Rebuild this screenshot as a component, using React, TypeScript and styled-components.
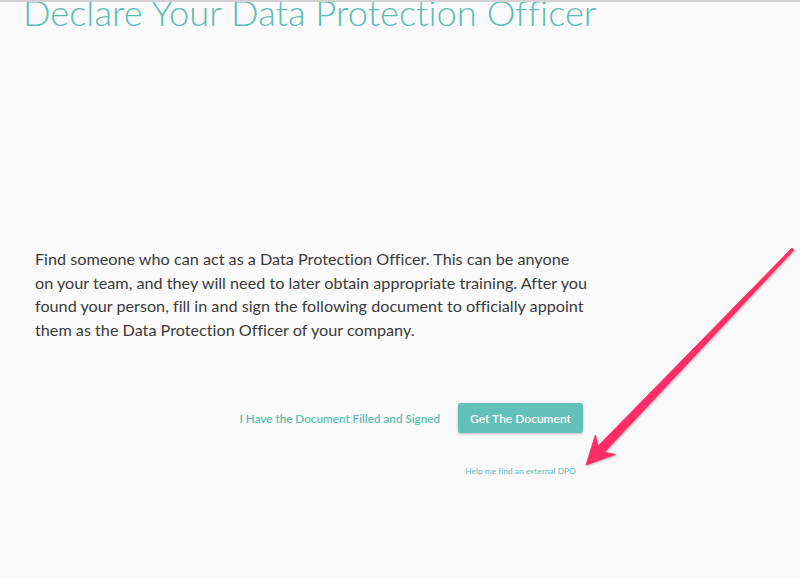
import React from "react";
import styled, { createGlobalStyle } from "styled-components";

const COLORS = {
  background: "#fafafa",
  teal: "#5bbdb5",
  button: "#62c0b8",
  text: "#3a3a3a",
  line: "#d2d2d2",
  arrow: "#fd2d68",
};

const GlobalStyle = createGlobalStyle`
  html, body {
    margin: 0;
    padding: 0;
    background: ${COLORS.background};
  }
  body {
    font-family: Lato, "Open Sans", "Liberation Sans", sans-serif;
    font-variant-ligatures: no-common-ligatures;
  }
`;

const Page = styled.div`
  position: relative;
  min-height: 578px;
  box-sizing: border-box;
  border-top: 2px solid ${COLORS.line};
  background: ${COLORS.background};
  overflow: hidden;
`;

const Content = styled.div`
  width: 580px;
  margin-left: 23px;
  overflow: hidden;
`;

const Title = styled.h1`
  margin: -10px 0 0;
  font-size: 36.3px;
  line-height: 40px;
  font-weight: 300;
  color: ${COLORS.teal};
  white-space: nowrap;
`;

const Description = styled.p`
  margin: 215px 0 0 12px;
  width: 566px;
  font-size: 16.2px;
  line-height: 23.5px;
  color: ${COLORS.text};
`;

const Actions = styled.div`
  display: flex;
  justify-content: flex-end;
  align-items: flex-start;
  gap: 18px;
  margin-top: 62px;
  padding: 0 20px 60px 0;
`;

const TextLink = styled.a`
  font-size: 11.7px;
  font-weight: 600;
  line-height: 30px;
  color: ${COLORS.teal};
  text-decoration: none;
  cursor: pointer;
`;

const ButtonColumn = styled.div`
  display: flex;
  flex-direction: column;
  align-items: center;
`;

const Button = styled.button`
  height: 30px;
  padding: 0 12px;
  border: none;
  border-radius: 3px;
  background: ${COLORS.button};
  color: #fff;
  font-family: inherit;
  font-size: 12px;
  font-weight: 600;
  box-shadow: 0 1px 3px rgba(0, 0, 0, 0.25);
  cursor: pointer;
`;

const HelpLink = styled.a`
  margin-top: 31px;
  font-size: 8.4px;
  line-height: 14px;
  color: ${COLORS.teal};
  text-decoration: none;
  cursor: pointer;
`;

const ArrowLayer = styled.svg`
  position: absolute;
  left: 0;
  top: 0;
  pointer-events: none;
  filter: drop-shadow(1px 1px 1px rgba(0, 0, 0, 0.25));
`;

const Arrow = () => (
  <ArrowLayer width="800" height="578" viewBox="0 0 800 578">
    <polygon
      points="791.9,246.1 794,248.1 604.5,450.2 615.5,452.5 586,463 595.3,433.1 598,444"
      fill={COLORS.arrow}
      strokeLinejoin="round"
      stroke={COLORS.arrow}
      strokeWidth="0.8"
    />
  </ArrowLayer>
);

const App = () => {
  return (
    <Page>
      <GlobalStyle />
      <Content>
        <Title>Declare Your Data Protection Officer</Title>
        <Description>
          Find someone who can act as a Data Protection Officer. This can be anyone
          <br />
          on your team, and they will need to later obtain appropriate training. After you
          <br />
          found your person, fill in and sign the following document to officially appoint
          <br />
          them as the Data Protection Officer of your company.
        </Description>
        <Actions>
          <TextLink>I Have the Document Filled and Signed</TextLink>
          <ButtonColumn>
            <Button>Get The Document</Button>
            <HelpLink>Help me find an external DPO</HelpLink>
          </ButtonColumn>
        </Actions>
      </Content>
      <Arrow />
    </Page>
  );
};

export default App;
